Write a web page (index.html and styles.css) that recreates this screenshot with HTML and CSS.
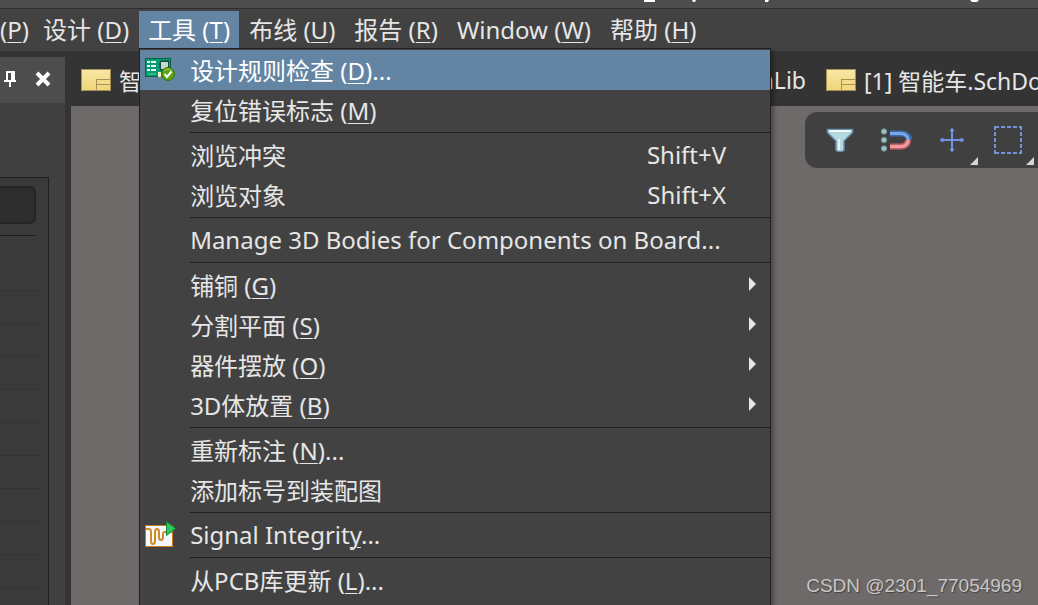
FILE: index.html
```html
<!DOCTYPE html>
<html lang="zh-CN">
<head>
  <meta charset="UTF-8" />
  <meta name="viewport" content="width=device-width, initial-scale=1.0"/>
  <title>智能车</title>
  <link rel="stylesheet" href="styles.css">
</head>
<body>
  <div class="app">
    <header class="titlebar">
      <svg class="title-marks" width="400" height="3" viewBox="0 0 400 3" fill="#fff">
        <path d="M4 0h11v2H4zM52 0h4l-1 2h-2zM125 0h4l-1 2h-3zM330 0h9l-2 2h-5z"/>
      </svg>
    </header>

    <nav class="menubar">
      <button class="menu-btn first">(<u>P</u>)</button>
      <button class="menu-btn">设计 (<u>D</u>)</button>
      <div class="menu-holder">
        <button class="menu-btn active">工具 (<u>T</u>)</button>
        <div class="dropdown">
          <button class="item selected">
            <svg class="item-icon" width="30" height="24" viewBox="0 0 30 24">
              <rect x=".5" y="1.500" width="25" height="18" fill="#0b9b72" stroke="#04623f"/>
              <path d="M2 4h3v2H2zM2 8h3v2H2zM2 12h3v2H2zM6 4h5v2H6zM6 8h5v2H6zM6 12h5v2H6z" fill="#e9f5ef"/>
              <path d="M17 3v2M20 3v2M23 3v2M17 13v2M20 13v2M14 7h2M14 10h2" stroke="#06452f" stroke-width="1.500"/>
              <rect x="15.500" y="4.500" width="8" height="8" fill="#c6d6d2" stroke="#16503d"/>
              <path d="M3 17h8" stroke="#5bcf9f"/>
              <rect x="13" y="15" width="3" height="5" fill="#f3eec0"/>
              <circle cx="23" cy="17" r="6.500" fill="#5ba516" stroke="#35720b"/>
              <path d="M19 13.500q4-3 8 0" stroke="#9bd252" fill="none"/>
              <path d="M19.500 17l2.500 3 4.500-5.500" fill="none" stroke="#fff" stroke-width="2"/>
            </svg>
            <span>设计规则检查 (<u>D</u>)...</span>
          </button>
          <button class="item"><span>复位错误标志 (<u>M</u>)</span></button>
          <hr>
          <button class="item"><span>浏览冲突</span><kbd>Shift+V</kbd></button>
          <button class="item"><span>浏览对象</span><kbd>Shift+X</kbd></button>
          <hr>
          <button class="item"><span>Manage 3D Bodies for Components on Board...</span></button>
          <hr>
          <button class="item sub"><span>铺铜 (<u>G</u>)</span></button>
          <button class="item sub"><span>分割平面 (<u>S</u>)</span></button>
          <button class="item sub"><span>器件摆放 (<u>O</u>)</span></button>
          <button class="item sub"><span>3D体放置 (<u>B</u>)</span></button>
          <hr>
          <button class="item"><span>重新标注 (<u>N</u>)...</span></button>
          <button class="item"><span>添加标号到装配图</span></button>
          <hr>
          <button class="item">
            <svg class="item-icon" width="32" height="28" viewBox="0 0 32 28">
              <rect x=".5" y="5.500" width="27" height="21" fill="#f5f8fc" stroke="#c97b1c"/>
              <path d="M1 9h3q2 0 2 3v9q0 3 2 3t2-3v-9q0-3 2-3t2 3v5q0 3 2 3t2-3v-3q0-2 2-2h7" fill="none" stroke="#d08a27" stroke-width="2"/>
              <path d="M21.500 1.500v14l9-7z" fill="#2fc85a" stroke="#128a37"/>
            </svg>
            <span>Signal Integrit<u>y</u>...</span>
          </button>
          <hr>
          <button class="item"><span>从PCB库更新 (<u>L</u>)...</span></button>
        </div>
      </div>
      <button class="menu-btn">布线 (<u>U</u>)</button>
      <button class="menu-btn">报告 (<u>R</u>)</button>
      <button class="menu-btn">Window (<u>W</u>)</button>
      <button class="menu-btn">帮助 (<u>H</u>)</button>
    </nav>

    <div class="workspace">
      <aside class="panel">
        <div class="panel-head">
          <button class="icon-btn" aria-label="Pin">
            <svg width="14" height="18" viewBox="0 0 14 18">
              <path d="M3 1h9v9h1v2H8v5H6v-5H1v-2h2z" fill="#fff"/>
              <path d="M5 3h3v7H5z" fill="#4d4d4d"/>
            </svg>
          </button>
          <button class="icon-btn" aria-label="Close">
            <svg width="16" height="16" viewBox="0 0 16 16"><path d="M2 2l12 12M14 2L2 14" stroke="#fff" stroke-width="4"/></svg>
          </button>
        </div>
        <div class="panel-box">
          <input class="panel-input" type="text" aria-label="Filter">
          <div class="panel-list">
            <div></div><div></div><div></div><div></div><div></div>
            <div></div><div></div><div></div><div></div><div></div>
          </div>
        </div>
      </aside>

      <main class="editor">
        <div class="tabs">
          <div class="tab-group">
            <button class="tab"><i class="doc"></i>智能车</button>
            <button class="tab">SchLib</button>
          </div>
          <button class="tab"><i class="doc"></i>[1] 智能车.SchDoc</button>
        </div>
        <div class="canvas">
          <div class="toolbar">
            <button class="tool" aria-label="Filter">
              <svg width="28" height="24" viewBox="0 0 28 24">
                <path d="M1.500 1.500h25v3L18 13v9l-2 1.500h-4L10 22v-9L1.500 4.500z" fill="#b4d9df" stroke="#648fac" stroke-width="1.500"/>
                <path d="M3 3h22" stroke="#f2fbfb" stroke-width="2"/>
                <path d="M13 11v11" stroke="#e3f3f3" stroke-width="2"/>
              </svg>
            </button>
            <button class="tool" aria-label="Snap">
              <svg width="32" height="24" viewBox="0 0 32 24">
                <g fill="#9fc0c5" stroke="#67888e"><circle cx="4" cy="3.500" r="2.800"/><circle cx="4" cy="12" r="2.800"/><circle cx="4" cy="20.500" r="2.800"/></g>
                <path d="M10 5.500h11q7 0 8.500 6.500" fill="none" stroke="#3b6ca8" stroke-width="6"/>
                <path d="M10 18.500h11q6 0 7.500-6.500" fill="none" stroke="#c95f66" stroke-width="6"/>
                <path d="M10 5.500h11q6 0 7.500 6.500" fill="none" stroke="#7ba5ec" stroke-width="3"/>
                <path d="M10 18.500h11q6 0 7.500-6.500" fill="none" stroke="#ef9da0" stroke-width="3"/>
              </svg>
            </button>
            <button class="tool more" aria-label="Move">
              <svg width="26" height="26" viewBox="0 0 26 26" stroke="#7391de" fill="#7391de">
                <path d="M13 2v22M2 13h22" stroke-width="2"/>
                <path d="M13 1l2 3h-4zM13 25l2-3h-4zM1 13l3-2v4zM25 13l-3-2v4z"/>
              </svg>
            </button>
            <button class="tool more" aria-label="Select area">
              <svg width="28" height="28" viewBox="0 0 28 28" fill="none" stroke="#7391de" stroke-width="2">
                <path d="M1 1h26M1 27h26" stroke-dasharray="4 2"/>
                <path d="M1 0v28M27 0v28" stroke-dasharray="4 2"/>
              </svg>
            </button>
          </div>
          <div class="watermark">CSDN @2301_77054969</div>
        </div>
      </main>
    </div>
  </div>
</body>
</html>
```
FILE: styles.css
```css
* {
  box-sizing: border-box;
}

body {
  margin: 0;
  background-color: #343434;
  color: #e6e6e6;
  font-family: "Noto Sans", "Noto Sans CJK SC", sans-serif;
  font-size: 24px;
}

button {
  border: none;
  padding: 0;
  background: none;
  color: inherit;
  font: inherit;
  white-space: nowrap;
  text-align: left;
}

u {
  text-decoration-thickness: 1px;
  text-underline-offset: 3px;
}

.app {
  display: flex;
  flex-direction: column;
  height: 100vh;
  overflow: hidden;
}

.titlebar {
  flex: none;
  height: 9px;
  background-color: #4d4d4d;
  border-bottom: 1px solid #2d2d2d;
}

.title-marks {
  display: block;
  margin-left: 640px;
}

/* menu bar */
.menubar {
  flex: none;
  display: flex;
  align-items: flex-start;
  gap: 1px;
  height: 42px;
  padding-top: 2px;
  background-color: #424242;
}

.menu-holder {
  position: relative;
}

.menu-btn {
  height: 37px;
  padding: 0 9px;
  line-height: 36px;
}

.menu-btn.first {
  padding: 0 4px 0 0;
}

.menu-btn.active {
  background-color: #6384a3;
  color: #fff;
}

.dropdown {
  position: absolute;
  z-index: 2;
  top: 37px;
  left: 0;
  min-width: 632px;
  height: 600px;
  padding-top: 1px;
  background-color: #424242;
  border: 1px solid #202020;
  box-shadow: 3px 3px 4px rgba(0,0,0,0.3);
}

.item {
  display: flex;
  align-items: center;
  position: relative;
  width: 100%;
  height: 40px;
  padding: 0 44px 2px 50px;
}

.item.selected {
  background-color: #6384a3;
  color: #fff;
}

.item kbd {
  margin-left: auto;
  font: inherit;
}

.item-icon {
  position: absolute;
  left: 5px;
}

.item.sub::after {
  content: "";
  margin-left: auto;
  margin-right: -30px;
  border-left: 7px solid #e6e6e6;
  border-top: 7px solid transparent;
  border-bottom: 7px solid transparent;
}

.dropdown hr {
  height: 1px;
  margin: 2px 0 2px 50px;
  border: none;
  background-color: #202020;
}

.workspace {
  flex: 1;
  display: flex;
  min-height: 0;
}

/* left panel */
.panel {
  flex: none;
  width: 65px;
  margin: 6px 6px 0 0;
  background-color: #404040;
  overflow: hidden;
}

.panel-head {
  display: flex;
  align-items: center;
  justify-content: space-between;
  height: 46px;
  padding: 0 14px 2px 3px;
  background-color: #4d4d4d;
}

.icon-btn {
  display: flex;
}

.panel-box {
  width: 49px;
  height: 100%;
  margin-top: 74px;
  padding-top: 8px;
  background-color: #3a3a3a;
  border-top: 1px solid #202020;
  border-right: 1px solid #202020;
}

.panel-input {
  display: block;
  width: 36px;
  height: 38px;
  padding: 0;
  background-color: #2d2d2d;
  border: 2px solid #242424;
  border-left: none;
  border-radius: 0 6px 6px 0;
}

.panel-list {
  width: 39px;
  margin-top: 11px;
  padding-top: 23px;
  background: linear-gradient(#202020, #202020) no-repeat 0 0 / 36px 1px;
}

.panel-list div {
  height: 33px;
  border-bottom: 1px solid #333;
}

/* documents */
.editor {
  flex: 1;
  display: flex;
  flex-direction: column;
  min-width: 0;
}

.tabs {
  flex: none;
  display: flex;
  height: 55px;
  padding: 3px 0 0 10px;
  overflow: hidden;
}

.tab-group {
  flex: none;
  display: flex;
  justify-content: space-between;
  width: 725px;
  margin-right: 20px;
}

.tab {
  flex: none;
  display: flex;
  align-items: center;
  gap: 8px;
  font-size: 23px;
}

.doc {
  position: relative;
  width: 30px;
  height: 22px;
  background: linear-gradient(#f8e6a4, #f0d67a);
  border: 1px solid #a8925a;
}

.doc::after {
  content: "";
  position: absolute;
  right: 0;
  bottom: 0;
  width: 13px;
  height: 10px;
  border: solid #a8925a;
  border-width: 1px 0 0 1px;
  background: linear-gradient(#a8925a, #a8925a) no-repeat 0 4px / 100% 1px;
}

.canvas {
  flex: 1;
  position: relative;
  display: flex;
  justify-content: flex-end;
  align-items: flex-start;
  padding-top: 6px;
  background-color: #6e6a69;
}

.toolbar {
  display: flex;
  height: 56px;
  padding: 0 2px 0 7px;
  background-color: #404040;
  border-radius: 12px 0 0 12px;
}

.tool {
  position: relative;
  display: flex;
  align-items: center;
  justify-content: center;
  width: 56px;
  padding-bottom: 1px;
}

.tool.more::after {
  content: "";
  position: absolute;
  right: 2px;
  bottom: 3px;
  border-left: 8px solid transparent;
  border-bottom: 8px solid #d6d6d6;
}

.watermark {
  position: absolute;
  right: 16px;
  bottom: 8px;
  color: #c8c6c5;
  font-family: "Liberation Sans", sans-serif;
  font-size: 19px;
  text-shadow: 1px 1px 1px #444;
}
```
